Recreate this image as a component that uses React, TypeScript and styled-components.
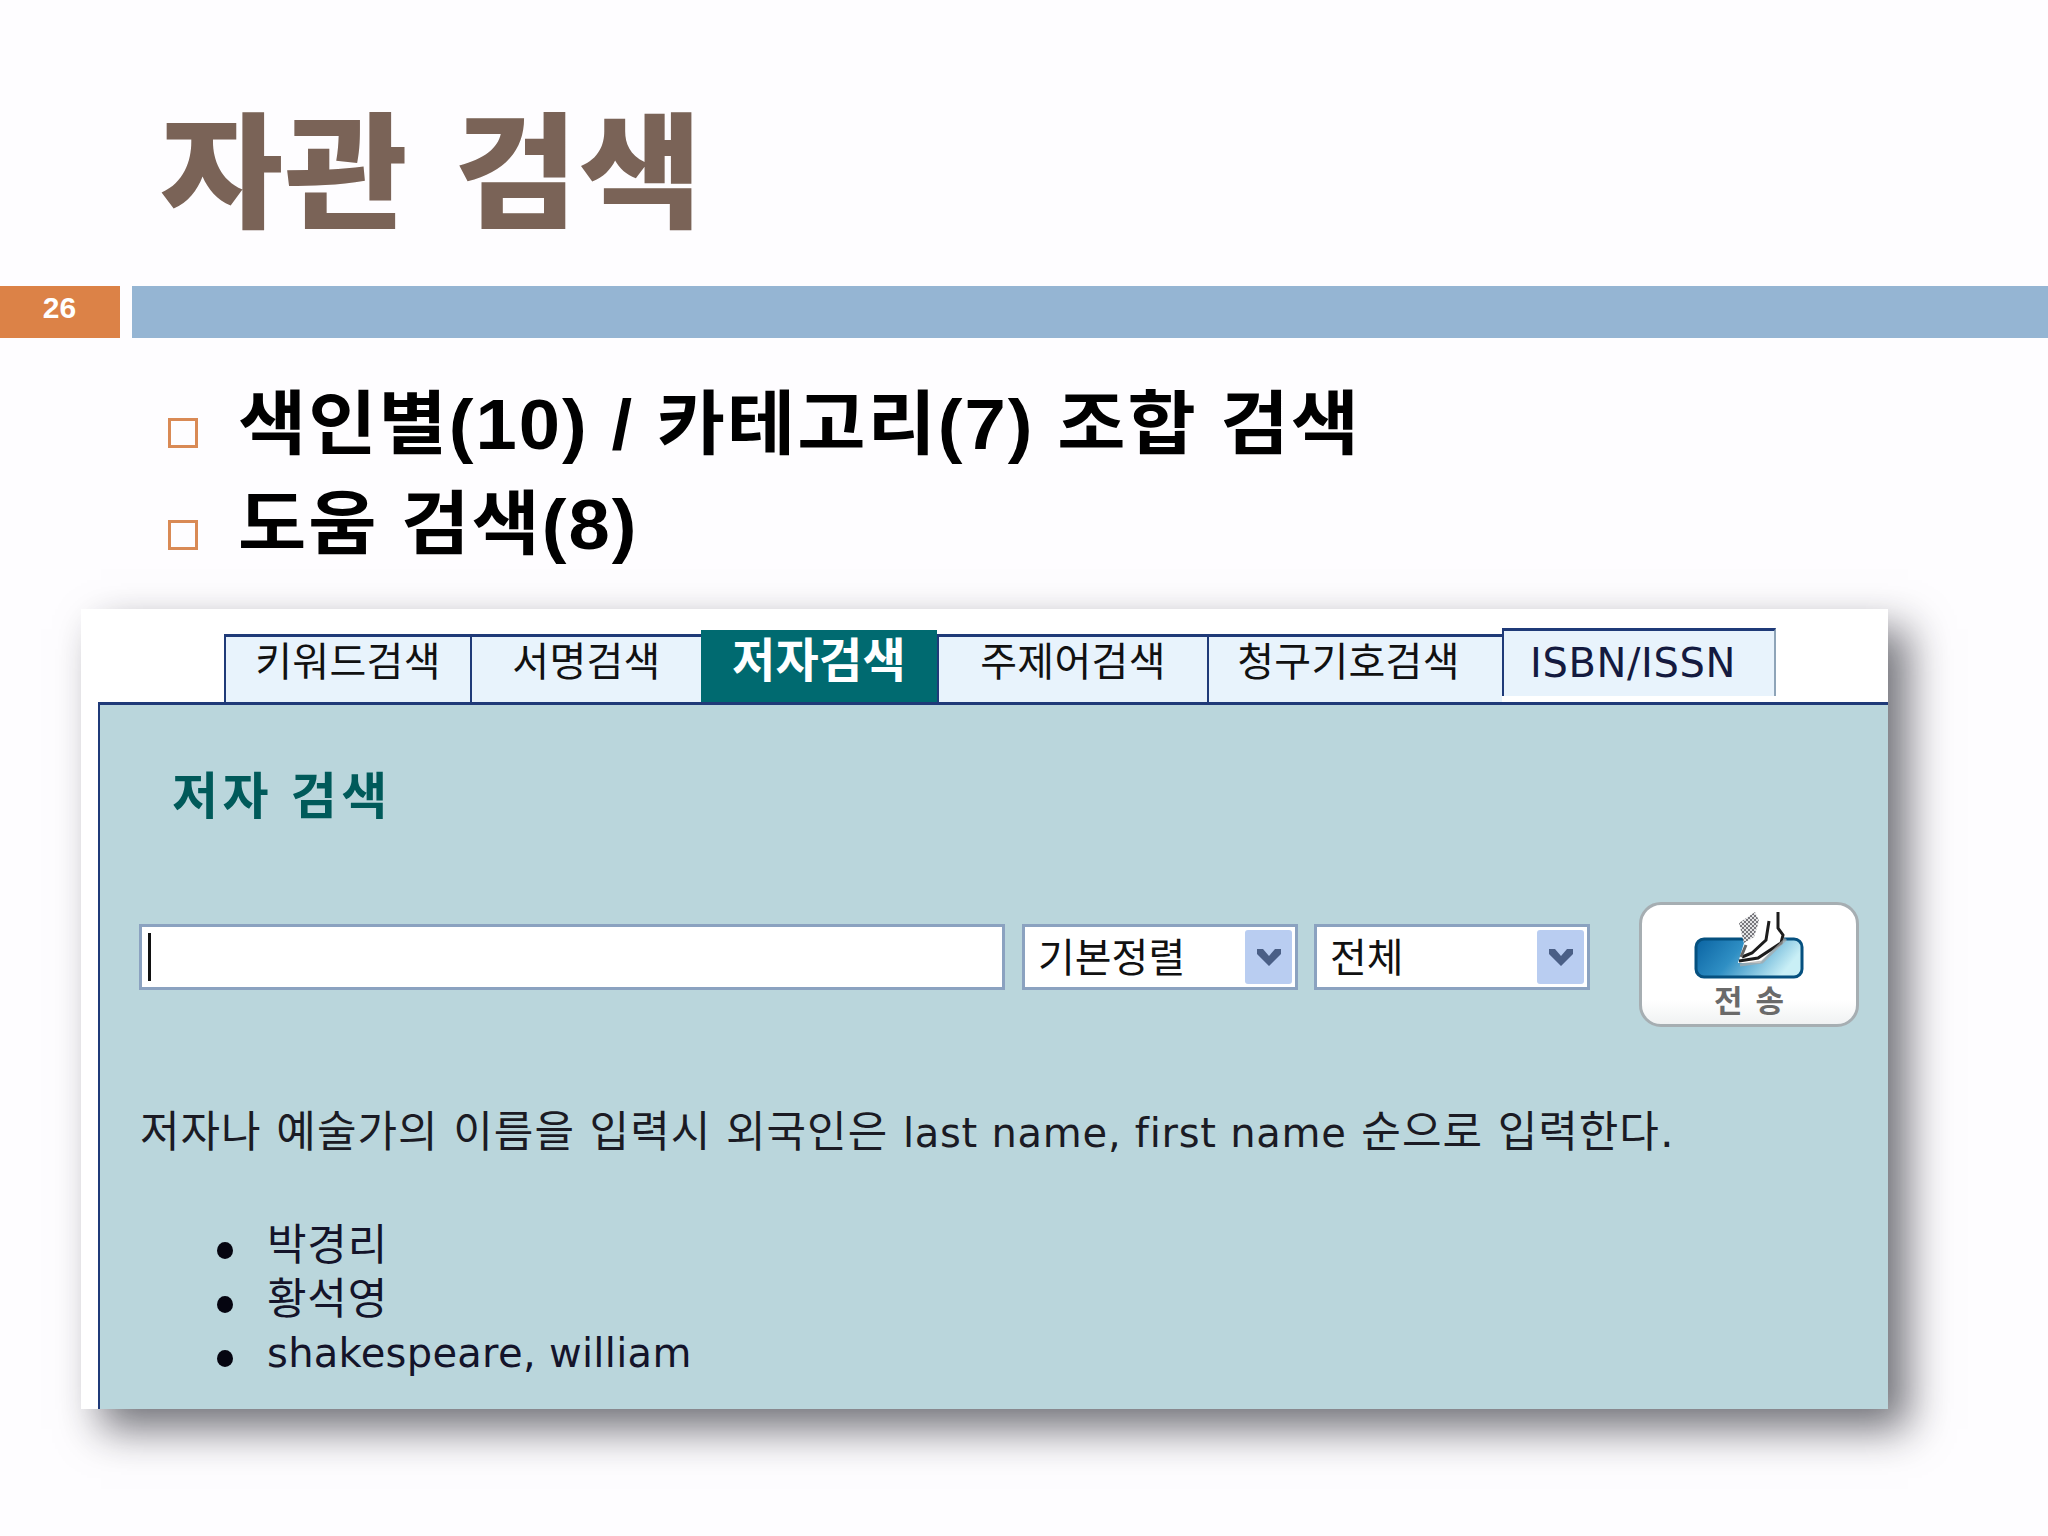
import styled, { createGlobalStyle } from "styled-components"

const tabs = [
  { label: "키워드검색", width: 246 },
  { label: "서명검색", width: 231 },
  { label: "저자검색", width: 236, active: true },
  { label: "주제어검색", width: 270 },
  { label: "청구기호검색", width: 295, shift: 14 },
]

const Global = createGlobalStyle`
  html, body {
    margin: 0;
    padding: 0;
    background: #fefdff;
  }
  * { box-sizing: border-box; }
`

const Slide = styled.div`
  width: 2048px;
  height: 1536px;
  overflow: hidden;
  background: #fefdff;
  font-family: "Liberation Sans", "Noto Sans CJK KR", sans-serif;
`

const TitleArea = styled.div`
  height: 286px;
  padding: 84px 0 0 160px;
`

const Title = styled.h1`
  margin: 0;
  font-family: "Noto Sans CJK KR", sans-serif;
  font-size: 125px;
  line-height: 160px;
  font-weight: 900;
  color: #7a6357;
  letter-spacing: 1.5px;
  word-spacing: 12px;
  transform: scaleX(1.07);
  transform-origin: left center;
`

const BarRow = styled.div`
  display: flex;
  gap: 12px;
  height: 52px;
`

const PageNo = styled.div`
  width: 120px;
  background: #dc8247;
  color: #fff;
  font-size: 30px;
  font-weight: 700;
  line-height: 44px;
  text-align: center;
  padding-right: 1px;
`

const BlueBar = styled.div`
  flex: 1;
  background: #95b5d3;
`

const Bullets = styled.ul`
  list-style: none;
  margin: 0;
  padding: 30px 0 0 168px;
  height: 271px;
`

const Bullet = styled.li`
  display: flex;
  align-items: center;
  height: 100px;
  gap: 40px;
  font-size: 70px;
  font-weight: 700;
  letter-spacing: 1.9px;
  color: #000;
  white-space: nowrap;
`

const BulletText = styled.span`
  transform: scaleX(1.06);
  transform-origin: left center;
`

const Box = styled.span<{ $top: number }>`
  width: 30px;
  height: 30px;
  margin-top: ${(p) => p.$top}px;
  border: 3px solid #d98a55;
  flex: none;
`

const Shot = styled.div`
  width: 1807px;
  height: 800px;
  margin-left: 81px;
  background: #fff;
  display: flex;
  flex-direction: column;
  box-shadow: 20px 20px 40px rgba(20, 20, 30, 0.6);
  font-family: "DejaVu Sans", "Noto Sans CJK KR", sans-serif;
`

const TabRow = styled.div`
  display: flex;
  align-items: flex-end;
  height: 93px;
  padding-left: 143px;
  flex: none;
`

const Tab = styled.div<{ $width: number; $active?: boolean; $shift?: number }>`
  width: ${(p) => p.$width}px;
  height: ${(p) => (p.$active ? 72 : 68)}px;
  display: flex;
  justify-content: center;
  padding-right: ${(p) => p.$shift ?? 0}px;
  background: ${(p) => (p.$active ? "#006a70" : "#e8f3fc")};
  border-top: ${(p) => (p.$active ? "none" : "3px solid #1f3a78")};
  border-left: ${(p) => (p.$active ? "none" : "2px solid #1f3a78")};
  color: ${(p) => (p.$active ? "#fff" : "#111")};
  font-size: ${(p) => (p.$active ? 47 : 40)}px;
  font-weight: ${(p) => (p.$active ? 700 : 400)};
  line-height: ${(p) => (p.$active ? 62 : 50)}px;
  letter-spacing: 0.3px;
`

const IsbnTab = styled.div`
  width: 274px;
  height: 68px;
  margin-bottom: 6px;
  padding-right: 12px;
  display: flex;
  justify-content: center;
  background: #e8f3fc;
  border-top: 3px solid #1f3a78;
  border-left: 2px solid #1f3a78;
  border-right: 2px solid #8ea4b8;
  color: #141a40;
  font-size: 40px;
  letter-spacing: 0.6px;
  line-height: 64px;
`

const Body = styled.div`
  flex: 1;
  margin-left: 17px;
  border-left: 2px solid #1f3a78;
  border-top: 3px solid #1f3a78;
  background: #bad6dc;
  padding: 0 0 0 40px;
`

const Heading = styled.h2`
  margin: 0;
  padding: 57px 0 0 32px;
  height: 189px;
  font-family: "Noto Sans CJK KR", sans-serif;
  font-size: 50px;
  line-height: 60px;
  font-weight: 700;
  letter-spacing: 4.5px;
  word-spacing: 2px;
  color: #005a5a;
`

const SearchRow = styled.div`
  display: flex;
  align-items: center;
  height: 126px;
`

const SearchInput = styled.div`
  width: 866px;
  height: 66px;
  margin: 0 17px 0 -1px;
  padding: 6px 6px;
  background: #fff;
  border: 3px solid #8ba2c0;
`

const Caret = styled.div`
  width: 3px;
  height: 48px;
  background: #111;
`

const SelectBox = styled.div<{ $gap: number }>`
  width: 276px;
  height: 66px;
  margin-right: ${(p) => p.$gap}px;
  display: flex;
  align-items: center;
  justify-content: space-between;
  padding: 0 3px 4px 13px;
  background: #fff;
  border: 3px solid #8ba2c0;
  font-size: 40px;
  color: #111;
`

const SelectArrow = styled.span`
  width: 47px;
  height: 54px;
  margin-bottom: -4px;
  display: flex;
  align-items: center;
  justify-content: center;
  background: #b9cdf1;
  border-radius: 3px;
`

const SendButton = styled.div`
  align-self: flex-start;
  width: 220px;
  height: 125px;
  margin-top: 8px;
  padding-top: 2px;
  display: flex;
  flex-direction: column;
  align-items: center;
  background: linear-gradient(#fff 80%, #f0f2f3);
  border: 3px solid #a6aeb2;
  border-radius: 22px;
  color: #6a6a6a;
  font-family: "Noto Sans CJK KR", sans-serif;
  font-size: 31px;
  font-weight: 700;
  line-height: 36px;
  word-spacing: 6px;
`

const SendIcon = styled.svg`
  display: block;
  flex: none;
  margin-bottom: 2px;
`

const Help = styled.p`
  margin: 0;
  padding-top: 84px;
  height: 198px;
  font-size: 43px;
  line-height: 56px;
  letter-spacing: 1px;
  color: #1b1b24;
  white-space: nowrap;
`

const Latin = styled.span`
  font-size: 40px;
  letter-spacing: 0.75px;
`

const Names = styled.ul`
  margin: 0;
  padding: 0 0 0 127px;
  list-style: none;
`

const Name = styled.li<{ $hangul?: boolean }>`
  position: relative;
  height: 54px;
  font-size: ${(p) => (p.$hangul ? 43 : 40)}px;
  line-height: 54px;
  letter-spacing: ${(p) => (p.$hangul ? 0.8 : 0.3)}px;
  color: #14142a;
  &::before {
    content: "";
    position: absolute;
    left: -50px;
    top: 24px;
    width: 16px;
    height: 17px;
    border-radius: 50%;
    background: #050510;
  }
`

const Chevron = () => (
  <svg width="28" height="19" viewBox="0 0 28 19">
    <path d="M2 1 L8 1 L14 8 L20 1 L26 1 L26 6 L14 18 L2 6 Z" fill="#4a5f86" />
  </svg>
)

const HandPill = () => (
  <SendIcon width="110" height="72" viewBox="0 0 110 72">
    <defs>
      <linearGradient id="pill" x1="0" y1="0" x2="1" y2="0.3">
        <stop offset="0" stopColor="#0a63a2" />
        <stop offset="0.45" stopColor="#2f8fc4" />
        <stop offset="1" stopColor="#c9eff6" />
      </linearGradient>
      <pattern id="dots" width="4" height="4" patternUnits="userSpaceOnUse">
        <rect width="4" height="4" fill="#e4e4e6" />
        <rect width="2" height="2" fill="#77777c" />
        <rect x="2" y="2" width="2" height="2" fill="#77777c" />
      </pattern>
    </defs>
    <rect x="2" y="32" width="106" height="38" rx="8" fill="url(#pill)" stroke="#05507f" strokeWidth="3" />
    <path d="M61 5 L45 16 L50 36 L44 56 L66 56 L90 32 L88 5 Z" fill="#fff" />
    <path d="M61 5 L45 16 L50 36 L60 30 L65 14 Z" fill="url(#dots)" />
    <path d="M84 5 L84 21 L89 28 L87 36 L64 51 L45 54" fill="none" stroke="#1c1c1c" strokeWidth="3" />
    <path d="M75 14 L72 33 L58 46 L48 50" fill="none" stroke="#1c1c1c" strokeWidth="3" />
    <path d="M52 38 L47 50" stroke="#666" strokeWidth="3" />
    <path d="M46 58 L68 55 L92 32" fill="none" stroke="#a8a8a8" strokeWidth="3" opacity="0.7" />
  </SendIcon>
)

const App = () => {
  return (
    <Slide>
      <Global />
      <TitleArea>
        <Title>자관 검색</Title>
      </TitleArea>
      <BarRow>
        <PageNo>26</PageNo>
        <BlueBar />
      </BarRow>
      <Bullets>
        <Bullet>
          <Box $top={30} />
          <BulletText>색인별(10) / 카테고리(7) 조합 검색</BulletText>
        </Bullet>
        <Bullet>
          <Box $top={34} />
          <BulletText>도움 검색(8)</BulletText>
        </Bullet>
      </Bullets>
      <Shot>
        <TabRow>
          {tabs.map((tab) => (
            <Tab key={tab.label} $width={tab.width} $active={tab.active} $shift={tab.shift}>
              {tab.label}
            </Tab>
          ))}
          <IsbnTab>ISBN/ISSN</IsbnTab>
        </TabRow>
        <Body>
          <Heading>저자 검색</Heading>
          <SearchRow>
            <SearchInput>
              <Caret />
            </SearchInput>
            <SelectBox $gap={16}>
              기본정렬
              <SelectArrow>
                <Chevron />
              </SelectArrow>
            </SelectBox>
            <SelectBox $gap={49}>
              전체
              <SelectArrow>
                <Chevron />
              </SelectArrow>
            </SelectBox>
            <SendButton>
              <HandPill />
              전 송
            </SendButton>
          </SearchRow>
          <Help>
            저자나 예술가의 이름을 입력시 외국인은 <Latin>last name, first name</Latin> 순으로 입력한다.
          </Help>
          <Names>
            <Name $hangul>박경리</Name>
            <Name $hangul>황석영</Name>
            <Name>shakespeare, william</Name>
          </Names>
        </Body>
      </Shot>
    </Slide>
  )
}

export default App
